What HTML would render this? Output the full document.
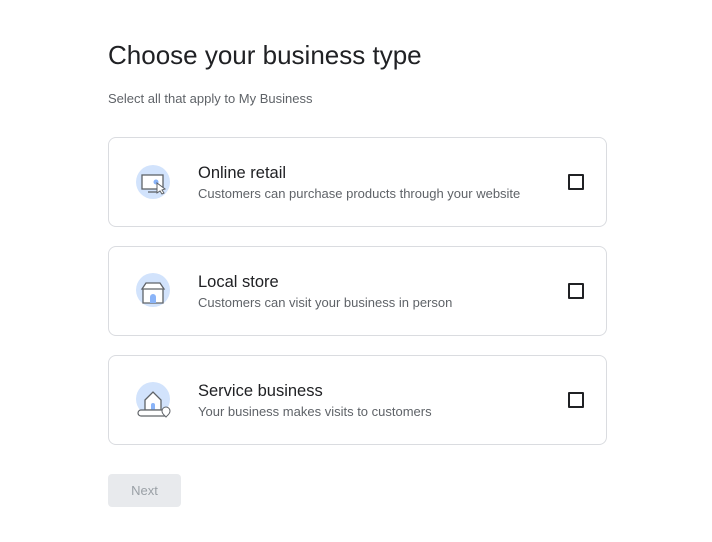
<!DOCTYPE html><html><head><style>
body{margin:0;width:712px;height:542px;background:#fff;font-family:"Liberation Sans",sans-serif;position:relative}
h1{position:absolute;left:108px;top:40px;margin:0;font-size:26px;font-weight:400;color:#202124}
.sub{position:absolute;left:108px;top:91px;font-size:13px;color:#5f6368}
.card{position:absolute;left:108px;width:499px;height:90px;border:1px solid #dadce0;border-radius:8px;box-sizing:border-box}
.card svg{position:absolute;left:26px;top:26px}
.t{position:absolute;left:89px;top:26px;font-size:16.5px;color:#202124}
.d{position:absolute;left:89px;top:48px;font-size:13px;color:#5f6368}
.cb{position:absolute;left:459px;top:36px;width:12px;height:12px;border:2px solid #202124;border-radius:1px}
.btn{position:absolute;left:108px;top:474px;width:73px;height:33px;background:#e8eaed;border-radius:4px;color:#9aa0a6;font-size:13px;text-align:center;line-height:33px}
</style></head><body>
<h1>Choose your business type</h1>
<div class="sub">Select all that apply to My Business</div>
<div class="card" style="top:137px"><svg width="38" height="38"><circle cx="18" cy="18" r="17" fill="#d2e3fc"/><rect x="7" y="11" width="21" height="14" fill="#fff" stroke="#5f6368" stroke-width="1.3"/><line x1="13" y1="28" x2="22" y2="28" stroke="#5f6368" stroke-width="1.3"/><circle cx="21" cy="18" r="2.5" fill="#8ab4f8"/><path d="M22 19l8 6-3 1 2 3-2 1-2-3-3 2z" fill="#fff" stroke="#5f6368"/></svg><div class="t">Online retail</div><div class="d">Customers can purchase products through your website</div><div class="cb"></div></div>
<div class="card" style="top:246px"><svg width="38" height="38"><circle cx="18" cy="17" r="17" fill="#d2e3fc"/><path d="M7 16l4-6h14l4 6z M8 16v14h20V16" fill="#fff" stroke="#5f6368" stroke-width="1.3"/><path d="M15 30v-6a3 3 0 0 1 6 0v6z" fill="#8ab4f8"/></svg><div class="t">Local store</div><div class="d">Customers can visit your business in person</div><div class="cb"></div></div>
<div class="card" style="top:355px"><svg width="38" height="38"><circle cx="18" cy="17" r="17" fill="#d2e3fc"/><path d="M10 18l8-8 8 8v10H10z" fill="#fff" stroke="#5f6368" stroke-width="1.3"/><path d="M16 28v-5a2 2 0 0 1 4 0v5z" fill="#8ab4f8"/><rect x="3" y="28" width="30" height="6" rx="3" fill="#fff" stroke="#5f6368" stroke-width="1.2"/><path d="M31 35c-3-3-4-4-4-6a4 4 0 0 1 8 0c0 2-1 3-4 6z" fill="#fff" stroke="#5f6368"/></svg><div class="t">Service business</div><div class="d">Your business makes visits to customers</div><div class="cb"></div></div>
<div class="btn">Next</div>
</body></html>
